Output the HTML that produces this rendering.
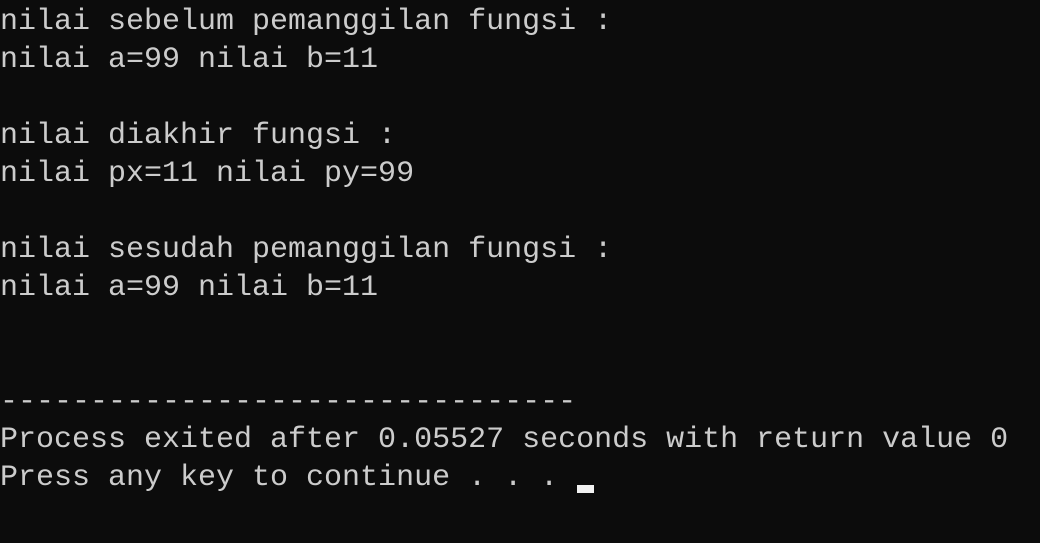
<!DOCTYPE html>
<html><head><style>
html,body{margin:0;padding:0;background:#0c0c0c;width:1040px;height:543px;overflow:hidden}
pre{margin:0;padding:0;position:absolute;left:0;top:3px;font-family:"Liberation Mono",monospace;font-size:30px;line-height:38px;color:#cccccc;white-space:pre}
.cur{position:absolute;left:577px;top:485px;width:17px;height:8px;background:#f2f2f2}
</style></head><body>
<pre>nilai sebelum pemanggilan fungsi :
nilai a=99 nilai b=11

nilai diakhir fungsi :
nilai px=11 nilai py=99

nilai sesudah pemanggilan fungsi :
nilai a=99 nilai b=11


--------------------------------
Process exited after 0.05527 seconds with return value 0
Press any key to continue . . . </pre>
<div class="cur"></div>
</body></html>
